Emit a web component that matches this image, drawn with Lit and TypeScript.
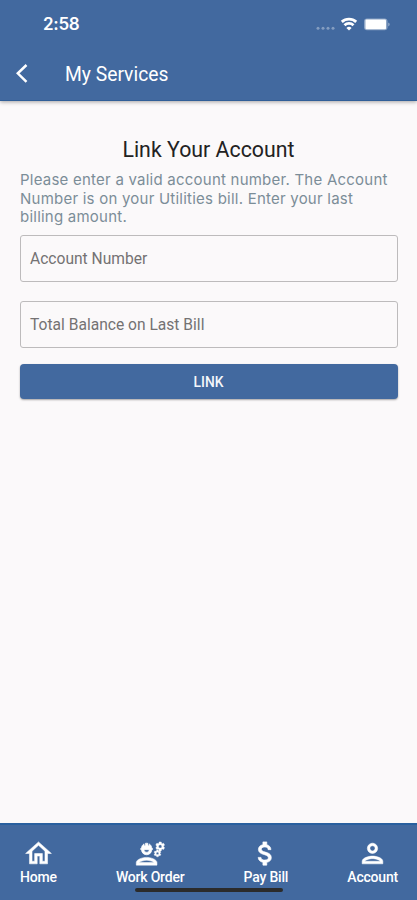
import { LitElement, html, svg, css } from "lit";
import { customElement } from "lit/decorators.js";

const gear =
  "M22.1 6.84c.01-.11.02-.22.02-.34 0-.12-.01-.23-.03-.34l.74-.58c.07-.05.08-.15.04-.22l-.7-1.21c-.04-.08-.14-.1-.21-.08l-.86.35c-.18-.14-.38-.25-.59-.34l-.13-.93c-.02-.09-.09-.15-.18-.15h-1.4c-.09 0-.16.06-.17.15l-.13.93c-.21.09-.41.21-.59.34l-.87-.35c-.08-.03-.17 0-.21.08l-.7 1.21c-.04.08-.03.17.04.22l.74.58c-.02.11-.03.23-.03.34 0 .11.01.23.03.34l-.74.58c-.07.05-.08.15-.04.22l.7 1.21c.04.08.14.1.21.08l.87-.35c.18.14.38.25.59.34l.13.93c.01.09.08.15.17.15h1.4c.09 0 .16-.06.17-.15l.13-.93c.21-.09.41-.21.59-.34l.87.35c.08.03.17 0 .21-.08l.7-1.21c.04-.08.03-.17-.04-.22l-.73-.58zM19.5 7.75c-.69 0-1.25-.56-1.25-1.25s.56-1.25 1.25-1.25 1.25.56 1.25 1.25-.56 1.25-1.25 1.25z";

const tabs = [
  {
    label: "Home",
    kind: "home",
    icon: svg`<path stroke="#fff" stroke-width=".4" d="M12 5.69l5 4.5V18h-2v-6H9v6H7v-7.81l5-4.5M12 3L2 12h3v8h6v-6h2v6h6v-8h3L12 3z"/>`,
  },
  {
    label: "Work Order",
    kind: "work",
    icon: svg`<path stroke="#fff" stroke-width=".4" d="M9 15c-2.67 0-8 1.34-8 4v2h16v-2c0-2.66-5.33-4-8-4zM3.4 19c.5-.75 3.2-1.7 5.6-1.7s5.1.95 5.6 1.7z"/>
      <path stroke="#fff" stroke-width=".5" d="M4.74 9H5c0 2.21 1.79 4 4 4s4-1.79 4-4h.26c.27 0 .49-.22.49-.49v-.02c0-.27-.22-.49-.49-.49H13c0-1.48-.81-2.75-2-3.45v.95c0 .28-.22.5-.5.5s-.5-.22-.5-.5V4.14C9.68 4.06 9.35 4 9 4s-.68.06-1 .14V5.5c0 .28-.22.5-.5.5S7 5.78 7 5.5v-.95C5.81 5.25 5 6.52 5 8h-.26c-.27 0-.49.22-.49.49v.03c0 .26.22.48.49.48zM11 9c0 1.1-.9 2-2 2s-2-.9-2-2h4z"/>
      <path stroke="#fff" stroke-width=".3" d=${gear}/><path stroke="#fff" stroke-width=".3" transform="translate(2.4 6.9) scale(.77)" d=${gear}/>`,
  },
  {
    label: "Pay Bill",
    kind: "pay",
    icon: svg`<path stroke="#fff" stroke-width=".5" d="M11.8 10.9c-2.27-.59-3-1.2-3-2.15 0-1.09 1.01-1.85 2.7-1.85 1.78 0 2.44.85 2.5 2.1h2.21c-.07-1.72-1.12-3.3-3.21-3.81V3h-3v2.16c-1.94.42-3.5 1.68-3.5 3.61 0 2.31 1.91 3.46 4.7 4.13 2.5.6 3 1.48 3 2.41 0 .69-.49 1.79-2.7 1.79-2.06 0-2.87-.92-2.98-2.1h-2.2c.12 2.19 1.76 3.42 3.68 3.83V21h3v-2.15c1.95-.37 3.5-1.5 3.5-3.55 0-2.84-2.43-3.81-4.7-4.4z"/>`,
  },
  {
    label: "Account",
    kind: "account",
    icon: svg`<path stroke="#fff" stroke-width=".4" d="M12 6c1.1 0 2 .9 2 2s-.9 2-2 2-2-.9-2-2 .9-2 2-2m0 10c2.7 0 5.8 1.29 6 2H6c.23-.72 3.31-2 6-2m0-12C9.79 4 8 5.79 8 8s1.79 4 4 4 4-1.79 4-4-1.79-4-4-4zm0 10c-2.67 0-8 1.34-8 4v2h16v-2c0-2.66-5.33-4-8-4z"/>`,
  },
];

@customElement("app-root")
export class AppRoot extends LitElement {
  static styles = css`
    :host {
      display: flex;
      flex-direction: column;
      height: 900px;
      position: relative;
      background: #fbf9fa;
      font-family: Roboto, sans-serif;
      overflow: hidden;
    }
    * { box-sizing: border-box; }
    header {
      height: 101px;
      flex: none;
      background: #42699f;
      border-bottom: 1px solid #315f98;
      color: #fff;
      box-shadow: 0 1px 4px rgba(0, 0, 0, 0.35);
    }
    .status {
      height: 48px;
      display: flex;
      align-items: center;
      justify-content: space-between;
      padding: 0 26px 0 43px;
    }
    .time {
      font: 600 17px/20px Inter, sans-serif;
      letter-spacing: -0.3px;
    }
    .signals { display: block; }
    .bar {
      height: 52px;
      display: flex;
      align-items: center;
      padding-left: 15px;
    }
    .title {
      margin-left: 37px;
      font-size: 19.3px;
      line-height: 24px;
      padding-top: 1px;
    }
    main {
      flex: 1;
      padding: 36px 19px 0 20px;
    }
    h1 {
      margin: 0;
      text-align: center;
      font-weight: 400;
      font-size: 21.3px;
      line-height: 26px;
      letter-spacing: 0.02px;
      padding-right: 1px;
      color: #222;
    }
    .copy {
      margin: 8px 0;
      font: 400 15px/18.5px Inter, sans-serif;
      letter-spacing: 0.23px;
      color: #7b8d98;
      white-space: nowrap;
    }
    .field {
      height: 47px;
      border: 1px solid #bdbbbc;
      border-radius: 3px;
      padding: 2px 9px 0;
      display: flex;
      align-items: center;
      font-size: 15.6px;
      line-height: 19px;
      color: #747273;
      margin-bottom: 19px;
    }
    .link {
      display: block;
      width: 100%;
      height: 35px;
      margin-top: -3px;
      border: 0;
      border-radius: 4px;
      background: #42699f;
      color: #f4f7fb;
      font: 500 13.8px/35px Roboto, sans-serif;
      box-shadow: 0 1px 2px rgba(0, 0, 0, 0.35);
      padding: 1px 1px 0 0;
    }
    nav {
      height: 77px;
      flex: none;
      background: #42699f;
      border-top: 2px solid #29609f;
      display: flex;
      justify-content: space-between;
      padding: 13px 19px 0 20px;
      color: #fff;
    }
    .tab {
      display: flex;
      flex-direction: column;
      align-items: center;
      font-size: 14px;
      font-weight: 500;
      letter-spacing: -0.2px;
      line-height: 17px;
      white-space: nowrap;
    }
    .tab svg {
      width: 31px;
      height: 31px;
      fill: #fff;
    }
    .indicator {
      position: absolute;
      left: 135px;
      top: 888px;
      width: 148px;
      height: 4px;
      border-radius: 2px;
      background: #2b2b2b;
    }
  `;

  render() {
    return html`
      <header>
        <div class="status">
          <span class="time">2:58</span>
          <svg class="signals" width="76" height="16" viewBox="0 0 76 16" fill="#fff">
            <g opacity=".35">
              <circle cx="3" cy="12.3" r="1.5"/><circle cx="8" cy="12.3" r="1.5"/>
              <circle cx="13" cy="12.3" r="1.5"/><circle cx="18" cy="12.3" r="1.5"/>
            </g>
            <g fill="none" stroke="#fff" stroke-width="2.8">
              <path d="M26.8 5.9a10.6 10.6 0 0 1 14.4 0"/>
              <path d="M29.5 9.2a6.4 6.4 0 0 1 9 0"/>
            </g>
            <path d="M34 14.6L31.4 12a3.8 3.8 0 0 1 5.2 0z"/>
            <rect x="49" y="2.6" width="23.5" height="11.6" rx="3" opacity=".4"/>
            <rect x="50.5" y="3.6" width="20.5" height="9.6" rx="1"/>
            <path d="M73.3 6.6c1.8.6 1.8 3.2 0 3.8z" opacity=".5"/>
          </svg>
        </div>
        <div class="bar">
          <svg width="13" height="20" viewBox="0 0 13 20" fill="none" stroke="#fff" stroke-width="2.5">
            <path d="M11.5 1L2.8 9.3l8.7 8.5"/>
          </svg>
          <span class="title">My Services</span>
        </div>
      </header>
      <main>
        <h1>Link Your Account</h1>
        <p class="copy">
          Please enter a valid account number. The Account<br />Number is on your Utilities bill. Enter your last<br />billing amount.
        </p>
        <div class="field">Account Number</div>
        <div class="field">Total Balance on Last Bill</div>
        <button class="link">LINK</button>
      </main>
      <nav>
        ${tabs.map(
          (t) => html`<div class="tab ${t.kind}"><svg viewBox="0 0 24 24">${t.icon}</svg><span>${t.label}</span></div>`
        )}
      </nav>
      <div class="indicator"></div>
    `;
  }
}
